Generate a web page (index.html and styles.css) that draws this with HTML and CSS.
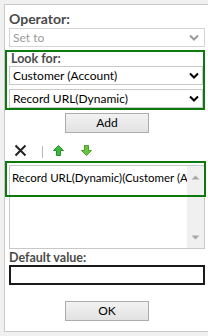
FILE: index.html
```html
<!DOCTYPE html>
<html>
<head>
<meta charset="utf-8">
<link rel="stylesheet" href="styles.css">
</head>
<body>
<div class="panel">
  <div class="label label-operator">Operator:</div>
  <div class="select select-disabled">
    <span class="select-text">Set to</span>
    <svg class="chev" width="10" height="7" viewBox="0 0 10 7"><path d="M1 1.5 L5 5.5 L9 1.5" fill="none" stroke="#9a9a9a" stroke-width="2"/></svg>
  </div>

  <div class="lookfor">
    <div class="label label-look">Look for:</div>
    <div class="select">
      <span class="select-text">Customer (Account)</span>
      <svg class="chev" width="10" height="7" viewBox="0 0 10 7"><path d="M1 1.5 L5 5.5 L9 1.5" fill="none" stroke="#000" stroke-width="2"/></svg>
    </div>
    <div class="select select-second">
      <span class="select-text">Record URL(Dynamic)</span>
      <svg class="chev" width="10" height="7" viewBox="0 0 10 7"><path d="M1 1.5 L5 5.5 L9 1.5" fill="none" stroke="#000" stroke-width="2"/></svg>
    </div>
  </div>

  <div class="btn-row btn-row-add"><div class="btn">Add</div></div>

  <div class="toolbar">
    <svg class="tool-x" width="13" height="13" viewBox="0 0 13 13"><path d="M1.5 1.5 L11.5 11.5 M11.5 1.5 L1.5 11.5" stroke="#222" stroke-width="2"/></svg>
    <span class="tool-sep"></span>
    <svg class="tool-up" width="11" height="11" viewBox="0 0 11 11"><path d="M5.5 0.5 L10.5 5.5 L7.5 5.5 L7.5 10.5 L3.5 10.5 L3.5 5.5 L0.5 5.5 Z" fill="#3cb83c" stroke="#2a8f2a" stroke-width="1"/></svg>
    <svg class="tool-down" width="11" height="11" viewBox="0 0 11 11"><path d="M5.5 10.5 L10.5 5.5 L7.5 5.5 L7.5 0.5 L3.5 0.5 L3.5 5.5 L0.5 5.5 Z" fill="#6cc43c" stroke="#4a9f2a" stroke-width="1"/></svg>
  </div>

  <div class="listwrap">
    <div class="listbox">
      <div class="list-items">
        <div class="list-item">Record URL(Dynamic)(Customer (Account))</div>
      </div>
      <div class="scrollbar">
        <svg width="9" height="5" viewBox="0 0 9 5"><path d="M0.5 4.5 L4.5 0.5 L8.5 4.5 Z" fill="#a8a8a8"/></svg>
        <svg width="9" height="5" viewBox="0 0 9 5"><path d="M0.5 0.5 L4.5 4.5 L8.5 0.5 Z" fill="#a8a8a8"/></svg>
      </div>
    </div>
    <div class="highlight"></div>
  </div>

  <div class="label label-default">Default value:</div>
  <div class="textinput"></div>

  <div class="btn-row btn-row-ok"><div class="btn">OK</div></div>
</div>
</body>
</html>
```

FILE: styles.css
```css
html, body {
  margin: 0;
  padding: 0;
  background: #f0f0f0;
  font-family: Lato, "Open Sans", sans-serif;
}
.panel {
  margin: 4px 0 0 4px;
  background: #fff;
  border: 1px solid #c9c9c9;
  border-right: none;
  box-sizing: border-box;
  height: 328px;
  display: flex;
  flex-direction: column;
}
.label {
  font-weight: bold;
  font-size: 12.5px;
  color: #4a4a4a;
  padding-left: 4px;
  height: 16px;
  line-height: 16px;
  white-space: nowrap;
}
.label-operator {
  margin-top: 5px;
  font-size: 14px;
  height: 18px;
  line-height: 18px;
}
.select {
  height: 19px;
  box-sizing: border-box;
  border: 1px solid #c8c8c8;
  display: flex;
  align-items: center;
  justify-content: space-between;
  padding: 0 3px 0 3px;
  font-size: 12px;
  color: #000;
  background: #fff;
}
.select-disabled {
  margin: 0 0 0 4px;
  width: 196px;
  color: #9a9a9a;
  border-color: #d4d4d4;
  padding-right: 5px;
}
.select-text { white-space: nowrap; overflow: hidden; line-height: 17px; }
.lookfor {
  margin-top: 3px;
  width: 200px;
  height: 60px;
  box-sizing: border-box;
  border: 2px solid #0e7a0e;
  padding: 0 2px 0 2px;
  display: flex;
  flex-direction: column;
}
.label-look {
  height: 14px;
  line-height: 13px;
  padding-left: 2px;
}
.lookfor .select { width: 194px; }
.select-second { margin-top: 4px; }
.btn-row {
  display: flex;
  padding-left: 60px;
}
.btn-row-add { margin-top: 3px; }
.btn {
  width: 84px;
  height: 20px;
  box-sizing: border-box;
  border: 1px solid #acacac;
  background: linear-gradient(#f2f2f2, #e2e2e2);
  font-size: 12px;
  line-height: 18px;
  text-align: center;
  color: #000;
}
.toolbar {
  margin-top: 10px;
  height: 14px;
  display: flex;
  align-items: center;
  padding-left: 9px;
}
.tool-x { margin-right: 15px; }
.tool-sep {
  width: 1px;
  height: 12px;
  background: #b8b8b8;
  margin-top: 4px;
  margin-right: 10px;
}
.tool-up { margin-right: 17px; }
.listwrap {
  position: relative;
  margin-top: 8px;
  padding-left: 4px;
}
.listbox {
  width: 196px;
  height: 84px;
  box-sizing: border-box;
  border: 1px solid #c8c8c8;
  display: flex;
}
.list-items {
  flex: 1;
  overflow: hidden;
  padding: 3px 0 0 2px;
}
.list-item {
  font-size: 11.5px;
  white-space: nowrap;
  line-height: 17px;
}
.scrollbar {
  width: 17px;
  background: #f0f0f0;
  display: flex;
  flex-direction: column;
  justify-content: space-between;
  align-items: center;
  padding: 9px 0 8px 0;
}
.highlight {
  position: absolute;
  left: 0;
  top: -4px;
  width: 201px;
  height: 36px;
  box-sizing: border-box;
  border: 2px solid #0e7a0e;
}
.label-default {
  margin-top: 1px;
  height: 15px;
  line-height: 15px;
}
.textinput {
  margin-left: 4px;
  width: 196px;
  height: 20px;
  box-sizing: border-box;
  border: 2px solid #1a1a1a;
}
.btn-row-ok { margin-top: 16px; }
```
